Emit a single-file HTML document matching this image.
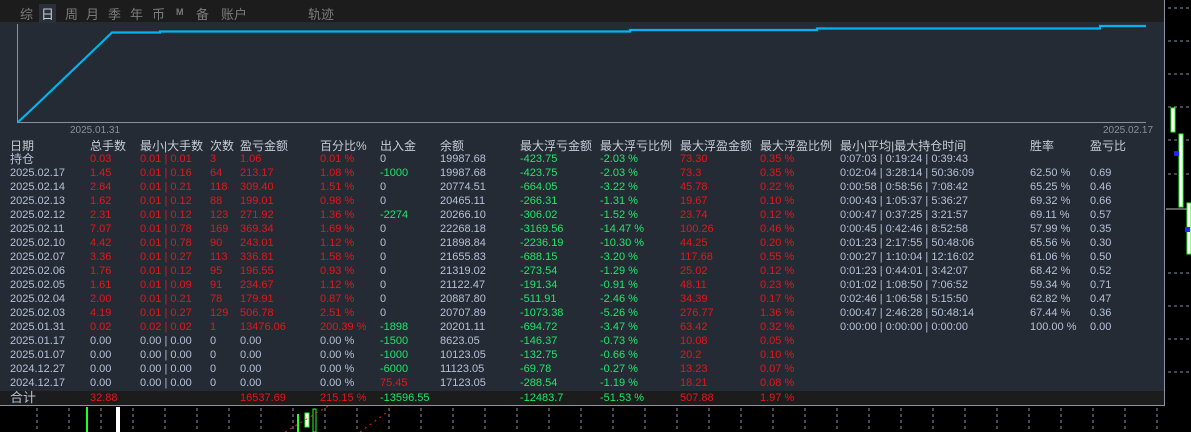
<!DOCTYPE html>
<html><head><meta charset="utf-8"><style>
*{margin:0;padding:0;box-sizing:border-box}
body{width:1191px;height:432px;background:#000;position:relative;overflow:hidden;font-family:"Liberation Sans","Noto Sans CJK SC",sans-serif;font-size:11px;color:#b4c0d6}
#panel{position:absolute;left:0;top:0;width:1165px;height:406px;background:#252b35;border-right:1px solid #8a94a4;border-bottom:1px solid #8a94a4}
#top{position:absolute;left:0;top:0;width:1164px;height:22px;background:#1c1c1c}
#top span{position:absolute;top:4px;font-size:13px;color:#7c7c7c}
.r{position:absolute;left:0;height:14px;line-height:14px;width:1164px;white-space:nowrap}
.r span{position:absolute;top:0}
.R{color:#e8141c}.G{color:#1ee66a}.B{color:#b4c0d6}
.hd{color:#c4ccd8;font-size:12px}
#sum{position:absolute;left:0;top:391px;width:1164px;height:14px;background:#1c1c1c}
</style></head><body>
<div id="panel">
<div id="top">
<span style="left:20px">综</span>
<span style="left:39px;background:#2a303a;color:#c8ccd4;padding:0 2px">日</span>
<span style="left:65px">周</span><span style="left:86px">月</span><span style="left:108px">季</span><span style="left:130px">年</span><span style="left:152px">币</span>
<span style="left:176px;font-size:9px;top:7px;font-weight:bold">M</span>
<span style="left:196px">备</span><span style="left:221px">账户</span><span style="left:308px">轨迹</span>
</div>
<svg style="position:absolute;left:0;top:0" width="1164" height="140">
<line x1="17.5" y1="24" x2="17.5" y2="123" stroke="#8a8f98" stroke-width="1"/>
<line x1="17" y1="122.5" x2="1146" y2="122.5" stroke="#8a8f98" stroke-width="1"/>
<polyline points="18,122 30,111 53,89 76,67 100,44 112,32.5 160,32.5 160,31.5 630,31.5 630,30 817,30 817,28.5 1100,28.5 1100,26 1146,26" fill="none" stroke="#00b4f0" stroke-width="2.2"/>
<text x="70" y="133" font-size="10" fill="#8a909a" font-family="Liberation Sans">2025.01.31</text>
<text x="1103" y="133" font-size="10" fill="#8a909a" font-family="Liberation Sans">2025.02.17</text>
</svg>
<div id="sum"></div>
</div>
<div class="r hd" style="top:139px"><span style="left:10px">日期</span><span style="left:90px">总手数</span><span style="left:140px">最小|大手数</span><span style="left:210px">次数</span><span style="left:240px">盈亏金额</span><span style="left:320px">百分比%</span><span style="left:380px">出入金</span><span style="left:440px">余额</span><span style="left:520px">最大浮亏金额</span><span style="left:600px">最大浮亏比例</span><span style="left:680px">最大浮盈金额</span><span style="left:760px">最大浮盈比例</span><span style="left:840px">最小|平均|最大持仓时间</span><span style="left:1030px">胜率</span><span style="left:1090px">盈亏比</span></div>
<script>
var d=[
["持仓","0.03","0.01 | 0.01","3","1.06","0.01 %","0","19987.68","-423.75","-2.03 %","73.30","0.35 %","0:07:03 | 0:19:24 | 0:39:43","",""],
["2025.02.17","1.45","0.01 | 0.16","64","213.17","1.08 %","-1000","19987.68","-423.75","-2.03 %","73.3","0.35 %","0:02:04 | 3:28:14 | 50:36:09","62.50 %","0.69"],
["2025.02.14","2.84","0.01 | 0.21","118","309.40","1.51 %","0","20774.51","-664.05","-3.22 %","45.78","0.22 %","0:00:58 | 0:58:56 | 7:08:42","65.25 %","0.46"],
["2025.02.13","1.62","0.01 | 0.12","88","199.01","0.98 %","0","20465.11","-266.31","-1.31 %","19.67","0.10 %","0:00:43 | 1:05:37 | 5:36:27","69.32 %","0.66"],
["2025.02.12","2.31","0.01 | 0.12","123","271.92","1.36 %","-2274","20266.10","-306.02","-1.52 %","23.74","0.12 %","0:00:47 | 0:37:25 | 3:21:57","69.11 %","0.57"],
["2025.02.11","7.07","0.01 | 0.78","169","369.34","1.69 %","0","22268.18","-3169.56","-14.47 %","100.26","0.46 %","0:00:45 | 0:42:46 | 8:52:58","57.99 %","0.35"],
["2025.02.10","4.42","0.01 | 0.78","90","243.01","1.12 %","0","21898.84","-2236.19","-10.30 %","44.25","0.20 %","0:01:23 | 2:17:55 | 50:48:06","65.56 %","0.30"],
["2025.02.07","3.36","0.01 | 0.27","113","336.81","1.58 %","0","21655.83","-688.15","-3.20 %","117.68","0.55 %","0:00:27 | 1:10:04 | 12:16:02","61.06 %","0.50"],
["2025.02.06","1.76","0.01 | 0.12","95","196.55","0.93 %","0","21319.02","-273.54","-1.29 %","25.02","0.12 %","0:01:23 | 0:44:01 | 3:42:07","68.42 %","0.52"],
["2025.02.05","1.61","0.01 | 0.09","91","234.67","1.12 %","0","21122.47","-191.34","-0.91 %","48.11","0.23 %","0:01:02 | 1:08:50 | 7:06:52","59.34 %","0.71"],
["2025.02.04","2.00","0.01 | 0.21","78","179.91","0.87 %","0","20887.80","-511.91","-2.46 %","34.39","0.17 %","0:02:46 | 1:06:58 | 5:15:50","62.82 %","0.47"],
["2025.02.03","4.19","0.01 | 0.27","129","506.78","2.51 %","0","20707.89","-1073.38","-5.26 %","276.77","1.36 %","0:00:47 | 2:46:28 | 50:48:14","67.44 %","0.36"],
["2025.01.31","0.02","0.02 | 0.02","1","13476.06","200.39 %","-1898","20201.11","-694.72","-3.47 %","63.42","0.32 %","0:00:00 | 0:00:00 | 0:00:00","100.00 %","0.00"],
["2025.01.17","0.00","0.00 | 0.00","0","0.00","0.00 %","-1500","8623.05","-146.37","-0.73 %","10.08","0.05 %","","",""],
["2025.01.07","0.00","0.00 | 0.00","0","0.00","0.00 %","-1000","10123.05","-132.75","-0.66 %","20.2","0.10 %","","",""],
["2024.12.27","0.00","0.00 | 0.00","0","0.00","0.00 %","-6000","11123.05","-69.78","-0.27 %","13.23","0.07 %","","",""],
["2024.12.17","0.00","0.00 | 0.00","0","0.00","0.00 %","75.45","17123.05","-288.54","-1.19 %","18.21","0.08 %","","",""],
["合计","32.88","","","16537.69","215.15 %","-13596.55","","-12483.7","-51.53 %","507.88","1.97 %","","",""]];
var xs=[10,90,140,210,240,320,380,440,520,600,680,760,840,1030,1090];
var h="";
d.forEach(function(r,i){
 var top=i<17?152+i*14:391;
 h+='<div class="r" style="top:'+top+'px">';
 r.forEach(function(v,j){
  if(v==="")return;
  var c="B";
  if(j>=1&&j<=5&&v.replace(/[ %|.0]/g,"")!=="")c="R";
  if(j==6){c=v.charAt(0)=="-"?"G":(v=="0"?"B":"R");}
  if(j==8||j==9)c="G";
  if(j==10||j==11)c="R";
  var st='left:'+xs[j]+'px';
  if(j==0&&i<=0)st+=';font-size:12px';
  if(j==0&&i==17)st+=';font-size:13px';
  h+='<span class="'+c+'" style="'+st+'">'+v+'</span>';
 });
 h+='</div>';
});
document.write(h);
</script>
<svg style="position:absolute;left:0;top:0" width="1191" height="432">
<g stroke="#8a94a4" stroke-dasharray="3,3" stroke-width="1">
<line x1="1168" y1="8" x2="1191" y2="8"/><line x1="1168" y1="41" x2="1191" y2="41"/><line x1="1168" y1="74" x2="1191" y2="74"/><line x1="1168" y1="107" x2="1191" y2="107"/><line x1="1168" y1="140" x2="1191" y2="140"/><line x1="1168" y1="174" x2="1191" y2="174"/><line x1="1168" y1="273" x2="1191" y2="273"/><line x1="1168" y1="306" x2="1191" y2="306"/><line x1="1168" y1="339" x2="1191" y2="339"/><line x1="1168" y1="372" x2="1191" y2="372"/>
<line x1="37" y1="408" x2="37" y2="432"/><line x1="69" y1="408" x2="69" y2="432"/><line x1="101" y1="408" x2="101" y2="432"/><line x1="133" y1="408" x2="133" y2="432"/><line x1="165" y1="408" x2="165" y2="432"/><line x1="197" y1="408" x2="197" y2="432"/><line x1="229" y1="408" x2="229" y2="432"/><line x1="261" y1="408" x2="261" y2="432"/><line x1="293" y1="408" x2="293" y2="432"/><line x1="325" y1="408" x2="325" y2="432"/><line x1="357" y1="408" x2="357" y2="432"/><line x1="389" y1="408" x2="389" y2="432"/><line x1="421" y1="408" x2="421" y2="432"/><line x1="453" y1="408" x2="453" y2="432"/><line x1="485" y1="408" x2="485" y2="432"/><line x1="517" y1="408" x2="517" y2="432"/><line x1="549" y1="408" x2="549" y2="432"/><line x1="581" y1="408" x2="581" y2="432"/><line x1="613" y1="408" x2="613" y2="432"/><line x1="645" y1="408" x2="645" y2="432"/><line x1="677" y1="408" x2="677" y2="432"/><line x1="709" y1="408" x2="709" y2="432"/><line x1="741" y1="408" x2="741" y2="432"/><line x1="773" y1="408" x2="773" y2="432"/><line x1="805" y1="408" x2="805" y2="432"/><line x1="837" y1="408" x2="837" y2="432"/><line x1="869" y1="408" x2="869" y2="432"/><line x1="901" y1="408" x2="901" y2="432"/><line x1="933" y1="408" x2="933" y2="432"/><line x1="965" y1="408" x2="965" y2="432"/><line x1="997" y1="408" x2="997" y2="432"/><line x1="1029" y1="408" x2="1029" y2="432"/><line x1="1061" y1="408" x2="1061" y2="432"/><line x1="1093" y1="408" x2="1093" y2="432"/><line x1="1125" y1="408" x2="1125" y2="432"/><line x1="1157" y1="408" x2="1157" y2="432"/>
</g>
<line x1="1166" y1="209" x2="1191" y2="209" stroke="#bbb"/>
<rect x="1171" y="108" width="4" height="24" fill="#fff" stroke="#2f2"/>
<rect x="1179" y="134" width="4" height="73" fill="#fff" stroke="#2f2"/>
<rect x="1187" y="203" width="4" height="51" fill="#fff" stroke="#2f2"/>
<rect x="1174" y="151" width="5" height="5" fill="#22f"/><rect x="1185" y="227" width="5" height="5" fill="#22f"/>
<rect x="86" y="407" width="2" height="25" fill="#2f2"/><rect x="116" y="407" width="4" height="25" fill="#fff"/>
<rect x="297" y="414" width="2" height="18" fill="#2f2"/><rect x="305" y="413" width="4" height="14" fill="#fff" stroke="#2f2"/><rect x="313" y="409" width="3" height="23" fill="none" stroke="#2f2"/>
<polyline points="285,432 330,405" fill="none" stroke="#e22" stroke-dasharray="2,4"/>
<polyline points="360,432 390,410" fill="none" stroke="#e22" stroke-dasharray="2,4"/>
</svg>
</body></html>
